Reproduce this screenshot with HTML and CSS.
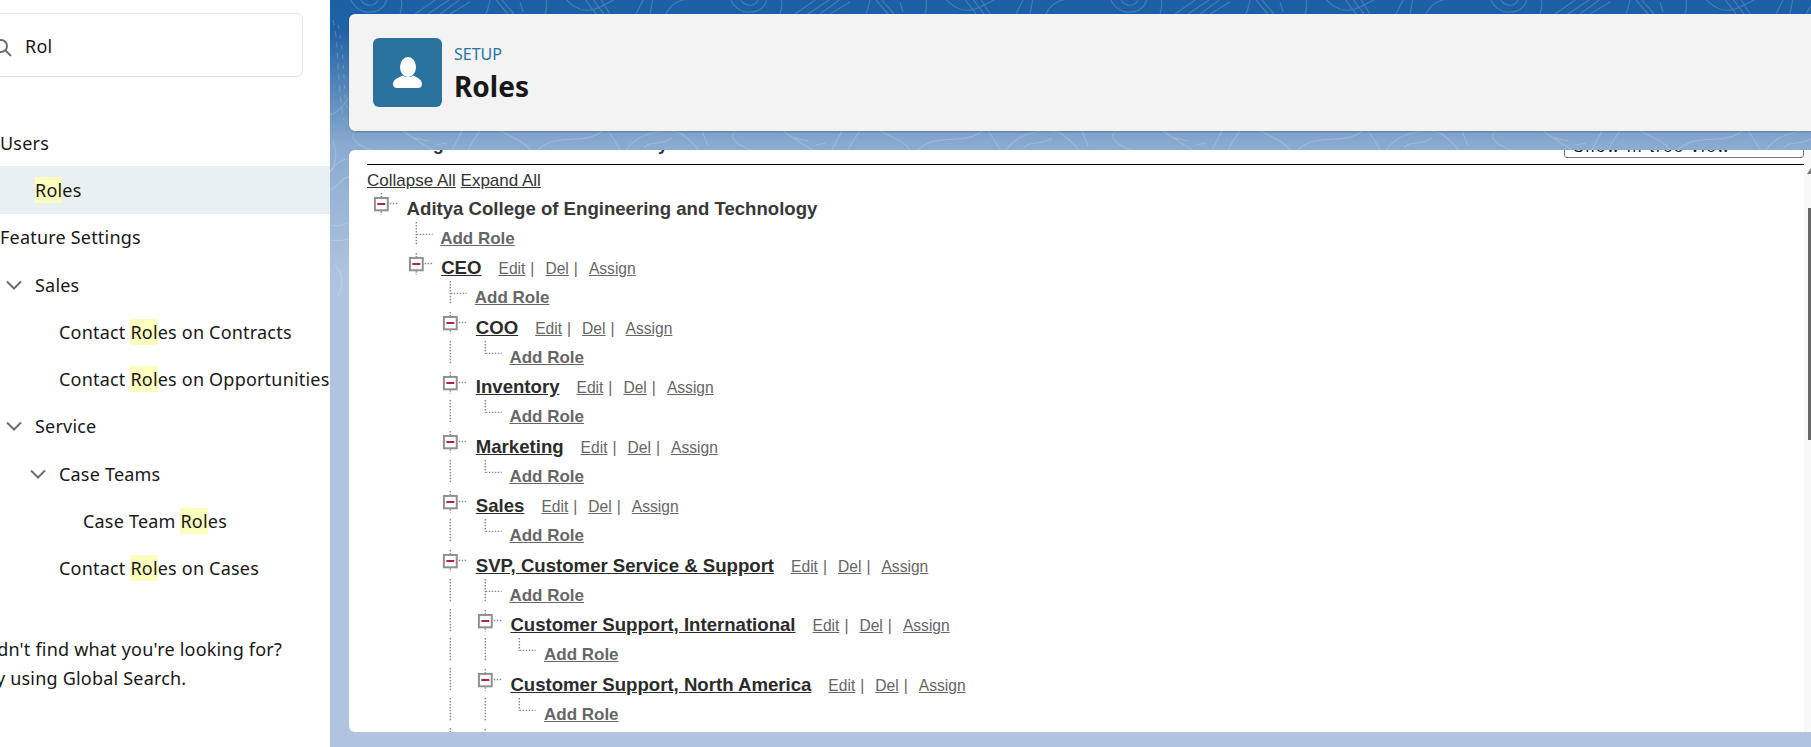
FILE: index.html
```html
<!DOCTYPE html>
<html lang="en">
<head>
    <meta charset="UTF-8">
    <title>Roles</title>
    <link rel="stylesheet" href="styles.css">
</head>
<body>

    <!-- Tree connector pieces, reused in every row -->
    <svg class="sprite" xmlns="http://www.w3.org/2000/svg">
        <symbol id="t-line" viewBox="0 -4 35 30">
            <path d="M14.5 -4V19" class="dots"/>
        </symbol>
        <symbol id="t-tee" viewBox="0 -4 35 30">
            <path d="M14.5 -4V19M15 8.500H31" class="dots"/>
        </symbol>
        <symbol id="t-corner" viewBox="0 -4 35 30">
            <path d="M14.5 -4V9M15 8.500H31" class="dots"/>
        </symbol>
        <symbol id="t-toggle" viewBox="0 -4 35 30">
            <path d="M14.5 -3V1M14.5 15.500V19M23 7.500H31" class="dots"/>
            <rect x="8" y="2" width="13" height="12.500" fill="#fff" stroke="#8f8f8f" stroke-width="2"/>
            <path d="M10.5 8.200H18.500" stroke="#b0243c" stroke-width="2"/>
        </symbol>
    </svg>

    <div class="page">
        <aside class="sidebar">
            <div class="search">
                <svg class="search-icon" width="20" height="20" viewBox="0 0 20 20">
                    <circle cx="8" cy="8" r="6" fill="none" stroke="#706e6b" stroke-width="2"/>
                    <path d="M12.5 12.5L18 18" stroke="#706e6b" stroke-width="2"/>
                </svg>
                <span class="search-text">Rol</span>
            </div>

            <ul class="nav">
                <li class="nav-item">Users</li>
                <li class="nav-item lvl-1 active"><mark>Rol</mark>es</li>
                <li class="nav-item">Feature Settings</li>
                <li class="nav-item lvl-1"><svg class="chev" width="16" height="10" viewBox="0 0 16 10"><path d="M1 1.5L8 8.5L15 1.5"/></svg>Sales</li>
                <li class="nav-item lvl-2">Contact <mark>Rol</mark>es on Contracts</li>
                <li class="nav-item lvl-2">Contact <mark>Rol</mark>es on Opportunities</li>
                <li class="nav-item lvl-1"><svg class="chev" width="16" height="10" viewBox="0 0 16 10"><path d="M1 1.5L8 8.5L15 1.5"/></svg>Service</li>
                <li class="nav-item lvl-2"><svg class="chev" width="16" height="10" viewBox="0 0 16 10"><path d="M1 1.5L8 8.5L15 1.5"/></svg>Case Teams</li>
                <li class="nav-item lvl-3">Case Team <mark>Rol</mark>es</li>
                <li class="nav-item lvl-2">Contact <mark>Rol</mark>es on Cases</li>
            </ul>

            <p class="nav-help">Didn't find what you're looking for?<br>Try using Global Search.</p>
        </aside>

        <main class="main">
            <!-- Contour lines in the page background -->
            <svg class="topo" width="1481" height="747" viewBox="0 0 1481 747" fill="none" stroke="#fff" stroke-opacity="0.18" stroke-width="1.2">
                <defs>
                    <g id="topo-top">
                        <path d="M20 -2C24 8 32 13 40 12C50 12 56 6 57 -2M30 -2C32 4 38 6 42 5C46 4 48 2 48 -2"/>
                        <path d="M70 14C72 8 72 2 71 -2M85 14L108 -2M98 14L122 -2M110 14L132 -2M120 14L140 2"/>
                        <path d="M156 14C158 8 160 4 160 -2M166 0L178 14M172 0L184 14M190 2L193 12M215 14C218 6 216 2 216 -2"/>
                        <path d="M235 -2C245 10 258 14 272 6C285 0 286 -2 288 -2M254 -2L266 14M262 -2L274 14M270 -2L280 14M306 14L314 -2M320 14L323 -2M336 14C342 2 350 0 362 -2"/>
                    </g>
                    <g id="topo-low">
                        <path d="M25 131C18 138 28 146 42 150M73 131L102 150M84 138L98 141M106 145L116 143M122 150L132 131M138 150C144 138 148 134 150 131"/>
                        <path d="M170 131C190 140 198 146 200 150M208 150C225 132 255 146 272 131M278 131C285 140 288 146 290 150M296 150C310 130 340 128 352 134C362 142 366 146 368 150"/>
                        <path d="M314 148C320 140 332 146 342 138M372 131L378 146"/>
                    </g>
                </defs>
                <use href="#topo-top"/>
                <use href="#topo-top" x="380"/>
                <use href="#topo-top" x="760"/>
                <use href="#topo-top" x="1140"/>
                <use href="#topo-low"/>
                <use href="#topo-low" x="380"/>
                <use href="#topo-low" x="760"/>
                <use href="#topo-low" x="1140"/>
                <path d="M3 20C10 50 6 80 14 120" stroke-dasharray="6 5"/>
                <path d="M8 25C16 60 12 90 18 112" stroke-dasharray="4 6"/>
                <path d="M0 115C8 112 14 106 18 98M2 140C8 150 6 165 0 172"/>
                <path d="M0 172C12 156 20 158 24 160M0 190C10 186 14 174 20 178M0 225C12 228 18 222 24 220M0 240C8 242 16 240 24 238"/>
                <path d="M4 265C14 272 14 284 8 296"/>
            </svg>

            <header class="page-head">
                <div class="head-icon">
                    <svg width="69" height="69" viewBox="0 0 69 69" fill="#fff">
                        <ellipse cx="35" cy="29" rx="8" ry="10"/>
                        <path d="M20 46C20 41 27 39 30 37.500C33 39.500 37 39.500 40 37.500C43 39 49 41 49 46C49 49 47 50 45 50H24C22 50 20 49 20 46Z"/>
                    </svg>
                </div>
                <div class="head-text">
                    <div class="head-kicker">SETUP</div>
                    <h1 class="head-title">Roles</h1>
                </div>
            </header>

            <section class="panel">
                <div class="panel-body">
                    <div class="view-head">
                        <h2 class="view-title">Your Organization's Role Hierarchy</h2>
                        <div class="view-select">Show in tree view</div>
                    </div>

                    <div class="tree-links"><a href="#">Collapse All</a> <a href="#">Expand All</a></div>

                    <div class="row">
                        <svg class="cell"><use href="#t-toggle"/></svg>
                        <span class="root-name">Aditya College of Engineering and Technology</span>
                    </div>
                    <div class="row">
                        <span class="gap"></span>
                        <svg class="cell"><use href="#t-tee"/></svg>
                        <a class="add" href="#">Add Role</a>
                    </div>

                    <div class="row">
                        <span class="gap"></span>
                        <svg class="cell"><use href="#t-toggle"/></svg>
                        <a class="name" href="#">CEO</a>
                        <span class="actions"><a href="#">Edit</a><i>|</i><a href="#">Del</a><i>|</i><a href="#">Assign</a></span>
                    </div>
                    <div class="row">
                        <span class="gap"></span><span class="gap"></span>
                        <svg class="cell"><use href="#t-tee"/></svg>
                        <a class="add" href="#">Add Role</a>
                    </div>

                    <div class="row">
                        <span class="gap"></span><span class="gap"></span>
                        <svg class="cell"><use href="#t-toggle"/></svg>
                        <a class="name" href="#">COO</a>
                        <span class="actions"><a href="#">Edit</a><i>|</i><a href="#">Del</a><i>|</i><a href="#">Assign</a></span>
                    </div>
                    <div class="row">
                        <span class="gap"></span><span class="gap"></span>
                        <svg class="cell"><use href="#t-line"/></svg>
                        <svg class="cell"><use href="#t-corner"/></svg>
                        <a class="add" href="#">Add Role</a>
                    </div>

                    <div class="row">
                        <span class="gap"></span><span class="gap"></span>
                        <svg class="cell"><use href="#t-toggle"/></svg>
                        <a class="name" href="#">Inventory</a>
                        <span class="actions"><a href="#">Edit</a><i>|</i><a href="#">Del</a><i>|</i><a href="#">Assign</a></span>
                    </div>
                    <div class="row">
                        <span class="gap"></span><span class="gap"></span>
                        <svg class="cell"><use href="#t-line"/></svg>
                        <svg class="cell"><use href="#t-corner"/></svg>
                        <a class="add" href="#">Add Role</a>
                    </div>

                    <div class="row">
                        <span class="gap"></span><span class="gap"></span>
                        <svg class="cell"><use href="#t-toggle"/></svg>
                        <a class="name" href="#">Marketing</a>
                        <span class="actions"><a href="#">Edit</a><i>|</i><a href="#">Del</a><i>|</i><a href="#">Assign</a></span>
                    </div>
                    <div class="row">
                        <span class="gap"></span><span class="gap"></span>
                        <svg class="cell"><use href="#t-line"/></svg>
                        <svg class="cell"><use href="#t-corner"/></svg>
                        <a class="add" href="#">Add Role</a>
                    </div>

                    <div class="row">
                        <span class="gap"></span><span class="gap"></span>
                        <svg class="cell"><use href="#t-toggle"/></svg>
                        <a class="name" href="#">Sales</a>
                        <span class="actions"><a href="#">Edit</a><i>|</i><a href="#">Del</a><i>|</i><a href="#">Assign</a></span>
                    </div>
                    <div class="row">
                        <span class="gap"></span><span class="gap"></span>
                        <svg class="cell"><use href="#t-line"/></svg>
                        <svg class="cell"><use href="#t-corner"/></svg>
                        <a class="add" href="#">Add Role</a>
                    </div>

                    <div class="row">
                        <span class="gap"></span><span class="gap"></span>
                        <svg class="cell"><use href="#t-toggle"/></svg>
                        <a class="name" href="#">SVP, Customer Service &amp; Support</a>
                        <span class="actions"><a href="#">Edit</a><i>|</i><a href="#">Del</a><i>|</i><a href="#">Assign</a></span>
                    </div>
                    <div class="row">
                        <span class="gap"></span><span class="gap"></span>
                        <svg class="cell"><use href="#t-line"/></svg>
                        <svg class="cell"><use href="#t-tee"/></svg>
                        <a class="add" href="#">Add Role</a>
                    </div>

                    <div class="row">
                        <span class="gap"></span><span class="gap"></span>
                        <svg class="cell"><use href="#t-line"/></svg>
                        <svg class="cell"><use href="#t-toggle"/></svg>
                        <a class="name" href="#">Customer Support, International</a>
                        <span class="actions"><a href="#">Edit</a><i>|</i><a href="#">Del</a><i>|</i><a href="#">Assign</a></span>
                    </div>
                    <div class="row">
                        <span class="gap"></span><span class="gap"></span>
                        <svg class="cell"><use href="#t-line"/></svg>
                        <svg class="cell"><use href="#t-line"/></svg>
                        <svg class="cell"><use href="#t-corner"/></svg>
                        <a class="add" href="#">Add Role</a>
                    </div>

                    <div class="row">
                        <span class="gap"></span><span class="gap"></span>
                        <svg class="cell"><use href="#t-line"/></svg>
                        <svg class="cell"><use href="#t-toggle"/></svg>
                        <a class="name" href="#">Customer Support, North America</a>
                        <span class="actions"><a href="#">Edit</a><i>|</i><a href="#">Del</a><i>|</i><a href="#">Assign</a></span>
                    </div>
                    <div class="row">
                        <span class="gap"></span><span class="gap"></span>
                        <svg class="cell"><use href="#t-line"/></svg>
                        <svg class="cell"><use href="#t-line"/></svg>
                        <svg class="cell"><use href="#t-corner"/></svg>
                        <a class="add" href="#">Add Role</a>
                    </div>

                    <div class="row">
                        <span class="gap"></span><span class="gap"></span>
                        <svg class="cell"><use href="#t-line"/></svg>
                        <svg class="cell"><use href="#t-toggle"/></svg>
                    </div>
                </div>

                <div class="scrollbar">
                    <div class="scroll-arrow"></div>
                    <div class="scroll-thumb"></div>
                </div>
            </section>
        </main>
    </div>

</body>
</html>
```

FILE: styles.css
```css
/* General Reset */
* {
    margin: 0;
    padding: 0;
    box-sizing: border-box;
}

html, body {
    height: 100%;
    overflow: hidden;
}

body {
    font-family: 'Noto Sans', sans-serif;
    color: #181818;
    background-color: #fff;
}

.sprite {
    display: none;
}

.page {
    display: flex;
    height: 747px;
}

/* Sidebar */
.sidebar {
    width: 330px;
    flex: none;
    background-color: #fff;
    overflow: hidden;
    font-size: 18px;
    letter-spacing: 0.2px;
}

.search {
    width: 323px;
    height: 64px;
    margin: 13px 0 0 -20px;
    padding-left: 12px;
    display: flex;
    align-items: center;
    gap: 12px;
    border: 1px solid #e5e5e5;
    border-radius: 6px;
    font-size: 18px;
}

.search-icon {
    flex: none;
    margin-top: 5px;
}

.search-text {
    margin-top: 1px;
}

.nav {
    list-style-type: none;
    margin-top: 42px;
}

.nav-item {
    height: 47.3px;
    display: flex;
    align-items: center;
    white-space: pre;
}

.lvl-1 {
    padding-left: 35px;
}

.lvl-2 {
    padding-left: 59px;
}

.lvl-3 {
    padding-left: 83px;
}

.active {
    background-color: #e9f0f3;
}

.chev {
    fill: none;
    stroke: #706e6b;
    stroke-width: 2;
    margin-left: -29px;
    margin-right: 13px;
    flex: none;
}

mark {
    background-color: #fdfdbd;
    color: inherit;
    padding: 1px 0;
}

.nav-help {
    margin: 43px 0 0 -21px;
    line-height: 29px;
    white-space: nowrap;
}

/* Main Area */
.main {
    position: relative;
    flex: 1;
    min-width: 0;
    overflow: hidden;
    padding: 14px 0 0 19px;
    background: linear-gradient(#1c5fa5 0, #1f62a6 30px, #8aaad0 145px, #b0c4df 280px);
}

.topo {
    position: absolute;
    top: 0;
    left: 0;
}

.page-head {
    position: relative;
    height: 117px;
    display: flex;
    align-items: center;
    gap: 12px;
    padding-left: 24px;
    background-color: #f3f3f3;
    border-radius: 6px 0 0 6px;
    box-shadow: 0 1px 2px rgba(0, 0, 0, 0.25);
}

.head-icon {
    width: 69px;
    height: 69px;
    border-radius: 6px;
    background-color: #2a739e;
}

.head-text {
    padding-top: 2px;
}

.head-kicker {
    font-size: 16px;
    line-height: 22px;
    color: #2a739e;
}

.head-title {
    margin-top: 2px;
    font-size: 28px;
    font-weight: 700;
    line-height: 38px;
}

/* Role Tree Panel */
.panel {
    position: relative;
    height: 582px;
    margin-top: 19px;
    display: flex;
    background-color: #fff;
    border-radius: 6px 0 0 6px;
    overflow: hidden;
    font-family: 'Liberation Sans', sans-serif;
}

.panel-body {
    flex: 1;
    min-width: 0;
    padding-left: 18px;
    overflow: hidden;
}

.view-head {
    height: 15px;
    display: flex;
    justify-content: space-between;
    align-items: flex-end;
    border-bottom: 1px solid #000;
}

.view-title {
    font-size: 18px;
    font-weight: 700;
    line-height: 18px;
    color: #333;
    margin-bottom: 11px;
    white-space: nowrap;
}

.view-select {
    width: 240px;
    height: 40px;
    flex: none;
    margin-bottom: 6px;
    padding: 19px 0 0 8px;
    border: 1px solid #767676;
    border-radius: 3px;
    font-size: 16px;
    letter-spacing: 1.9px;
    line-height: 18px;
    color: #111;
}

.tree-links {
    height: 29px;
    line-height: 31px;
    font-size: 17px;
}

.tree-links a {
    color: #333;
}

.row {
    height: 29.76px;
    display: flex;
    align-items: center;
    white-space: nowrap;
}

.cell {
    width: 34.6px;
    height: 29.7px;
    flex: none;
    margin-top: -4px;
    overflow: visible;
}

.dots {
    fill: none;
    stroke: #8a8a8a;
    stroke-width: 1.5;
    stroke-dasharray: 1.5 1.5;
}

.gap {
    width: 34.6px;
    flex: none;
}

.root-name {
    margin-left: 5px;
    font-size: 18.6px;
    font-weight: 700;
    color: #383838;
}

.name {
    margin-left: 5px;
    font-size: 18.6px;
    font-weight: 700;
    color: #2b2b2b;
}

.add {
    margin-left: 4px;
    font-size: 17px;
    font-weight: 700;
    color: #666;
}

.actions {
    margin: 2px 0 0 17px;
    font-size: 15.6px;
    color: #666;
}

.actions a {
    color: #666;
}

.actions i {
    font-style: normal;
    margin: 0 11px 0 5px;
}

/* Scrollbar */
.scrollbar {
    width: 7px;
    flex: none;
    background-color: #f8f8f8;
    position: relative;
}

.scroll-arrow {
    position: absolute;
    top: 18px;
    right: 0;
    width: 0;
    height: 0;
    border-left: 4px solid transparent;
    border-bottom: 6px solid #777;
}

.scroll-thumb {
    position: absolute;
    top: 58px;
    right: 0;
    width: 3px;
    height: 232px;
    background-color: #666;
}
```
